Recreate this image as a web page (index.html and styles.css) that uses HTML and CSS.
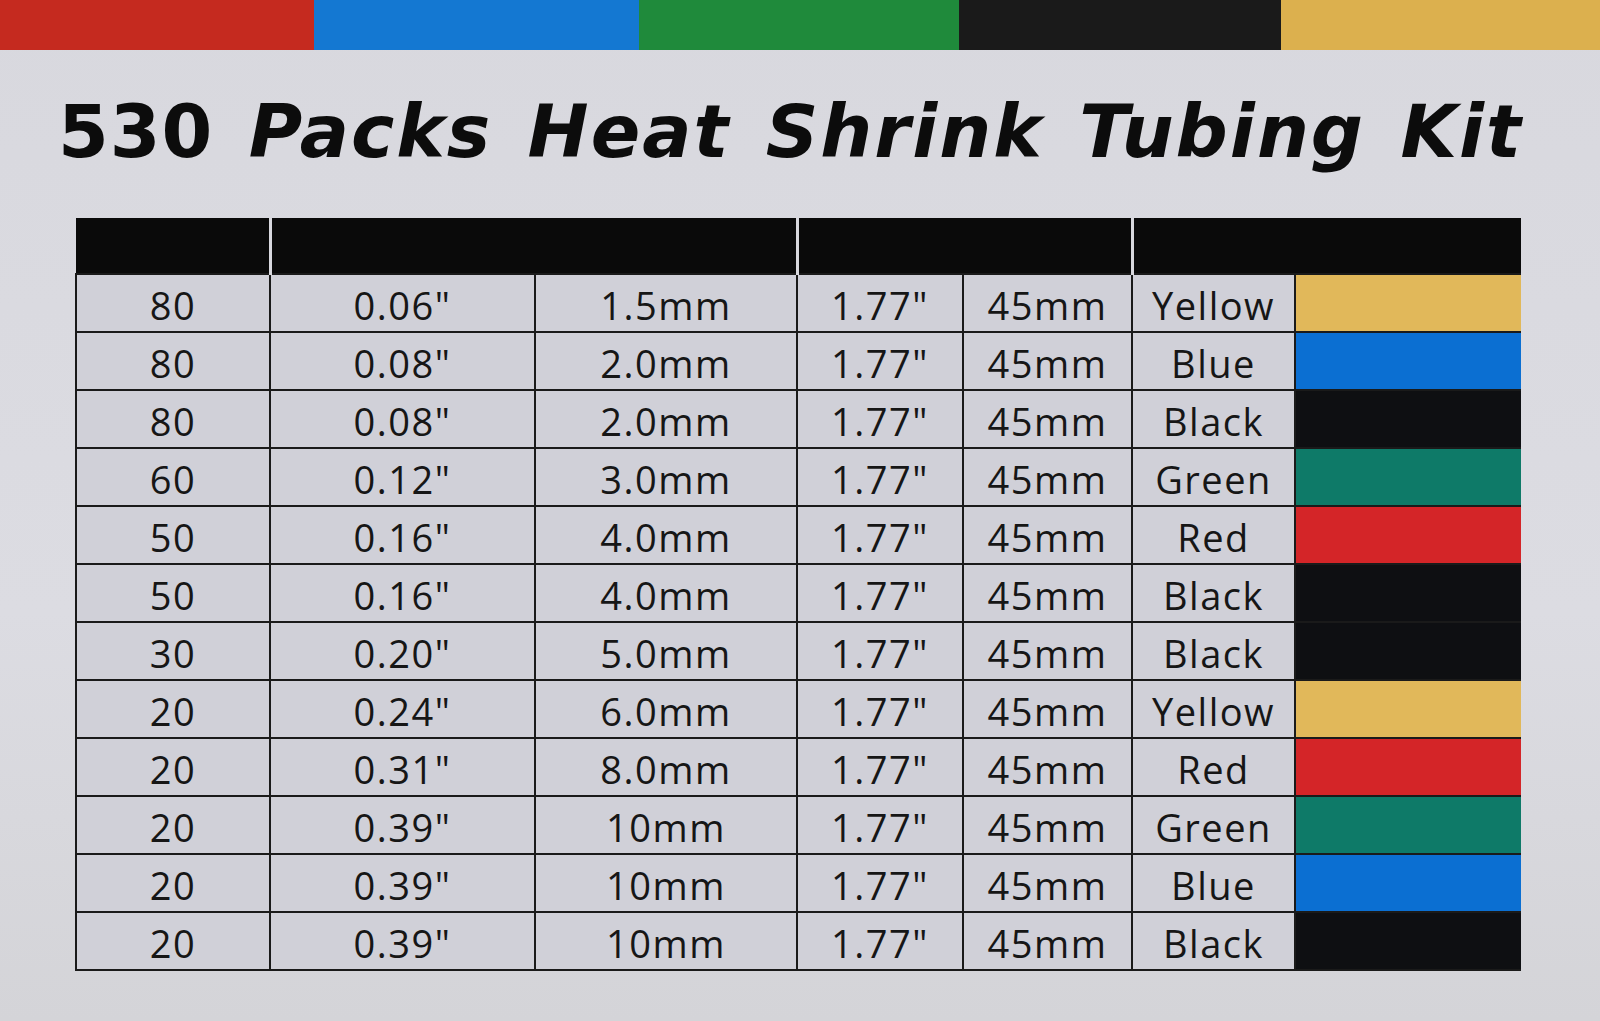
FILE: index.html
```html
<!DOCTYPE html>
<html lang="en">
<head>
    <meta charset="UTF-8">
    <title>530 Packs Heat Shrink Tubing Kit</title>

    <link rel="stylesheet" href="styles.css">
</head>
<body>

<div class="stripes">
    <div class="stripe stripe-red"></div>
    <div class="stripe stripe-blue"></div>
    <div class="stripe stripe-green"></div>
    <div class="stripe stripe-black"></div>
    <div class="stripe stripe-yellow"></div>
</div>

<h1 class="title"><span class="title-num">530</span> Packs Heat Shrink Tubing Kit</h1>

<table class="kit">
    <colgroup>
        <col class="c-qty">
        <col class="c-in">
        <col class="c-mm">
        <col class="c-len-in">
        <col class="c-len-mm">
        <col class="c-name">
        <col class="c-swatch">
    </colgroup>
    <thead>
        <tr>
            <th></th>
            <th colspan="2"></th>
            <th colspan="2"></th>
            <th colspan="2"></th>
        </tr>
    </thead>
    <tbody>
        <tr><td>80</td><td>0.06"</td><td>1.5mm</td><td>1.77"</td><td>45mm</td><td>Yellow</td><td class="swatch yellow"></td></tr>
        <tr><td>80</td><td>0.08"</td><td>2.0mm</td><td>1.77"</td><td>45mm</td><td>Blue</td><td class="swatch blue"></td></tr>
        <tr><td>80</td><td>0.08"</td><td>2.0mm</td><td>1.77"</td><td>45mm</td><td>Black</td><td class="swatch black"></td></tr>
        <tr><td>60</td><td>0.12"</td><td>3.0mm</td><td>1.77"</td><td>45mm</td><td>Green</td><td class="swatch green"></td></tr>
        <tr><td>50</td><td>0.16"</td><td>4.0mm</td><td>1.77"</td><td>45mm</td><td>Red</td><td class="swatch red"></td></tr>
        <tr><td>50</td><td>0.16"</td><td>4.0mm</td><td>1.77"</td><td>45mm</td><td>Black</td><td class="swatch black"></td></tr>
        <tr><td>30</td><td>0.20"</td><td>5.0mm</td><td>1.77"</td><td>45mm</td><td>Black</td><td class="swatch black"></td></tr>
        <tr><td>20</td><td>0.24"</td><td>6.0mm</td><td>1.77"</td><td>45mm</td><td>Yellow</td><td class="swatch yellow"></td></tr>
        <tr><td>20</td><td>0.31"</td><td>8.0mm</td><td>1.77"</td><td>45mm</td><td>Red</td><td class="swatch red"></td></tr>
        <tr><td>20</td><td>0.39"</td><td>10mm</td><td>1.77"</td><td>45mm</td><td>Green</td><td class="swatch green"></td></tr>
        <tr><td>20</td><td>0.39"</td><td>10mm</td><td>1.77"</td><td>45mm</td><td>Blue</td><td class="swatch blue"></td></tr>
        <tr><td>20</td><td>0.39"</td><td>10mm</td><td>1.77"</td><td>45mm</td><td>Black</td><td class="swatch black"></td></tr>
    </tbody>
</table>

</body>
</html>
```

FILE: styles.css
```css
body {
    margin: 0;
    padding: 0;
    width: 1600px;
    height: 1021px;
    overflow: hidden;
    background: linear-gradient(180deg, #d8d8de 0%, #dcdce2 60%, #d4d4d8 100%);
    font: 38px "Open Sans", "Noto Sans", sans-serif;
    color: #161616;
}

.stripes {
    display: flex;
    height: 50px;
}

.stripe {
    height: 100%;
}

.stripe-red {
    width: 314px;
    background: #c52a1f;
}

.stripe-blue {
    width: 325px;
    background: #1478d2;
}

.stripe-green {
    width: 320px;
    background: #1f8a3b;
}

.stripe-black {
    width: 322px;
    background: #1a1a1a;
}

.stripe-yellow {
    width: 319px;
    background: #dcb04e;
}

.title {
    margin: 0;
    padding: 42px 0 0 58px;
    height: 125px;
    box-sizing: border-box;
    font: italic bold 73px "DejaVu Sans", "Liberation Sans", sans-serif;
    letter-spacing: 2px;
    word-spacing: 8px;
    line-height: 80px;
    color: #0c0c0c;
    white-space: nowrap;
}

.title-num {
    font-style: normal;
    letter-spacing: 1px;
}

.kit {
    margin: 43px 0 0 75px;
    border-collapse: collapse;
    table-layout: fixed;
    width: 1445px;
}

.c-qty { width: 194px; }
.c-in { width: 265px; }
.c-mm { width: 262px; }
.c-len-in { width: 166px; }
.c-len-mm { width: 169px; }
.c-name { width: 163px; }
.c-swatch { width: 226px; }

.kit th {
    height: 55px;
    padding: 0;
    background: #0a0a0a;
    border-left: 3px solid #d8d8de;
}

.kit th:first-child {
    border-left: 0;
}

.kit td {
    height: 53px;
    padding: 3px 0 0 0;
    border: 2px solid #1a1a1a;
    background: #d0d0d8;
    text-align: center;
    letter-spacing: 1.5px;
    line-height: 1;
}

.kit td.swatch {
    border-right: 0;
}

.swatch.yellow { background: #e1b85a; }
.swatch.blue { background: #0b6fd2; }
.swatch.black { background: #0e0f12; }
.swatch.green { background: #0e7a68; }
.swatch.red { background: #d42528; }
```
